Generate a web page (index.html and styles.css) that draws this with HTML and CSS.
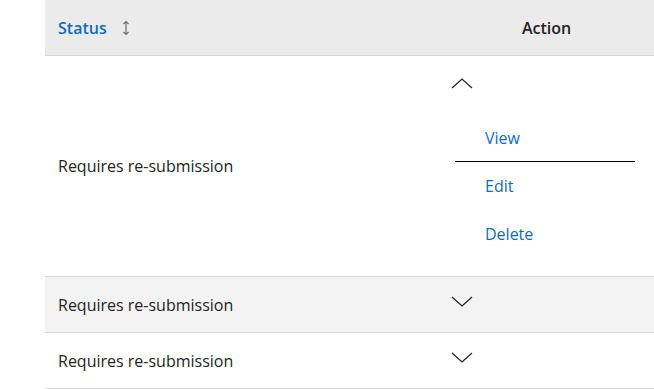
FILE: index.html
```html
<!DOCTYPE html>
<html lang="en">
<head>
    <meta charset="UTF-8">
    <meta name="viewport" content="width=device-width, initial-scale=1.0">
    <title>Submissions</title>
    <link rel="stylesheet" href="styles.css">
</head>
<body>
    <table class="grid">
        <thead>
            <tr>
                <th class="col-status">
                    <span class="sort">Status</span>
                    <svg class="sort-icon" width="8" height="16" viewBox="0 0 8 16" aria-hidden="true">
                        <path d="M4 1.5v13M1.5 4L4 1.5 6.5 4M1.5 12L4 14.5 6.5 12" fill="none" stroke="#707070" stroke-width="1.2"/>
                    </svg>
                </th>
                <th class="col-action">Action</th>
            </tr>
        </thead>
        <tbody>
            <tr class="open">
                <td class="status">Requires re-submission</td>
                <td class="action">
                    <button class="toggle" aria-expanded="true">
                        <svg width="22" height="11" viewBox="0 0 22 11"><path d="M1 10L11 1l10 9" fill="none" stroke="#242424" stroke-width="1.3"/></svg>
                    </button>
                    <ul class="menu">
                        <li class="first"><a href="#">View</a></li>
                        <li><a href="#">Edit</a></li>
                        <li><a href="#">Delete</a></li>
                    </ul>
                </td>
            </tr>
            <tr class="shaded">
                <td class="status">Requires re-submission</td>
                <td class="action">
                    <button class="toggle" aria-expanded="false">
                        <svg width="22" height="11" viewBox="0 0 22 11"><path d="M1 1l10 9 10-9" fill="none" stroke="#242424" stroke-width="1.3"/></svg>
                    </button>
                </td>
            </tr>
            <tr>
                <td class="status">Requires re-submission</td>
                <td class="action">
                    <button class="toggle" aria-expanded="false">
                        <svg width="22" height="11" viewBox="0 0 22 11"><path d="M1 1l10 9 10-9" fill="none" stroke="#242424" stroke-width="1.3"/></svg>
                    </button>
                </td>
            </tr>
        </tbody>
    </table>
</body>
</html>
```

FILE: styles.css
```css
body {
    font-family: "Open Sans", "Liberation Sans", sans-serif;
    font-size: 16px;
    color: #242424;
    background-color: #fff;
    margin: 0;
    padding: 0 0 0 45px;
}
.grid {
    width: 609px;
    border-collapse: collapse;
}
th, td {
    padding: 0 13px;
    text-align: left;
    border-bottom: 1px solid #d6d6d6;
}
thead th {
    background-color: #ebebeb;
    height: 55px;
    font-weight: 600;
}
.col-status {
    width: 368px;
}
.col-action {
    text-align: center;
}
.sort {
    color: #0f6cbd;
}
.sort-icon {
    vertical-align: -2px;
    margin-left: 11px;
}
tbody tr {
    height: 56px;
}
.shaded {
    background-color: #f3f3f3;
}
.status {
    vertical-align: middle;
}
.action {
    vertical-align: top;
    padding: 19px 12px 0 12px;
}
.open .action {
    padding-top: 22px;
    padding-bottom: 18px;
}
.toggle {
    display: block;
    background: none;
    border: none;
    padding: 0;
    margin: 0;
    height: 11px;
    cursor: pointer;
}
.toggle svg {
    display: block;
}
.menu {
    list-style: none;
    margin: 25px 7px 0 4px;
    padding: 0;
}
.menu li {
    height: 48px;
    line-height: 48px;
    padding-left: 30px;
}
.menu li.first {
    height: 47px;
    border-bottom: 1px solid #000;
}
.menu a {
    color: #0f6cbd;
    text-decoration: none;
}
```
